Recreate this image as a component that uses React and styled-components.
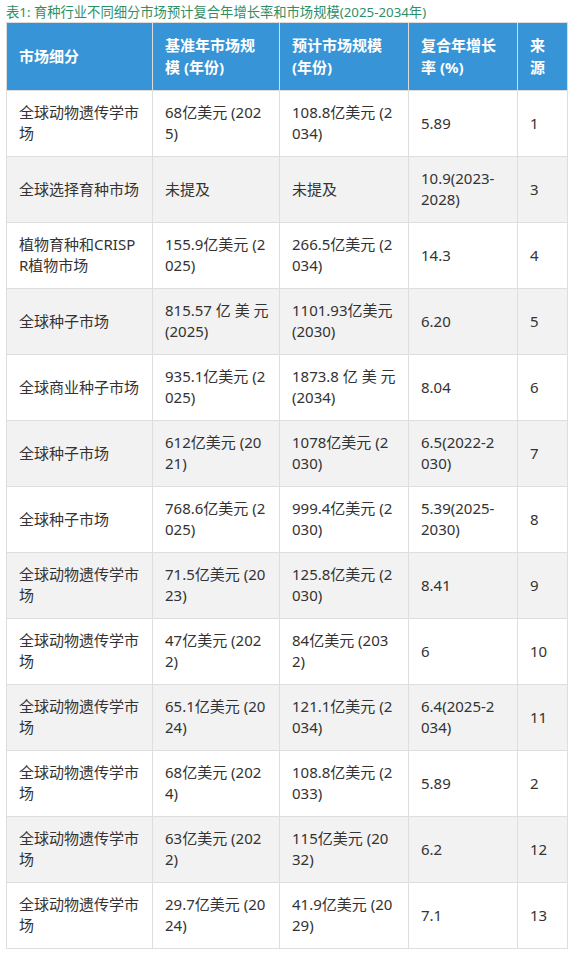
import React from 'react';
import styled, { createGlobalStyle } from 'styled-components';

const GlobalStyle = createGlobalStyle`
  html, body {
    margin: 0;
    padding: 0;
    background: #fff;
  }
  body {
    font-family: "Noto Sans", "Noto Sans CJK SC", sans-serif;
    color: #333;
  }
`;

const Page = styled.div`
  padding: 2px 5px 0 6px;
`;

const Caption = styled.div`
  font-size: 13.3px;
  line-height: 20px;
  color: #2f8f66;
  white-space: nowrap;
`;

const Table = styled.table`
  width: 561px;
  border-collapse: collapse;
  table-layout: fixed;
`;

const HeadCell = styled.th`
  background: #3794d6;
  color: #fff;
  font-size: 15px;
  font-weight: 700;
  line-height: 22px;
  text-align: left;
  vertical-align: middle;
  height: 44px;
  padding: 11px ${p => p.$pr}px 12px 12px;
  border: 1px solid #dcdcdc;
`;

const Row = styled.tr`
  background: ${p => (p.$alt ? '#f2f2f2' : '#fff')};
`;

const Cell = styled.td`
  font-size: 15px;
  line-height: 21px;
  height: 42px;
  padding: 11px ${p => p.$pr}px 12px 12px;
  vertical-align: middle;
  word-break: break-all;
  border: 1px solid #dedede;
  color: #333;
`;

const columns = [
  { title: '市场细分', width: 146, pr: 12 },
  { title: '基准年市场规模 (年份)', width: 127, pr: 10 },
  { title: '预计市场规模 (年份)', width: 129, pr: 12 },
  { title: '复合年增长率 (%)', width: 109, pr: 18 },
  { title: '来源', width: 50, pr: 12 },
];

const rows = [
  ['全球动物遗传学市场', '68亿美元 (2025)', '108.8亿美元 (2034)', '5.89', '1'],
  ['全球选择育种市场', '未提及', '未提及', '10.9(2023-2028)', '3'],
  ['植物育种和CRISPR植物市场', '155.9亿美元 (2025)', '266.5亿美元 (2034)', '14.3', '4'],
  ['全球种子市场', '815.57 亿 美 元 (2025)', '1101.93亿美元 (2030)', '6.20', '5'],
  ['全球商业种子市场', '935.1亿美元 (2025)', '1873.8 亿 美 元 (2034)', '8.04', '6'],
  ['全球种子市场', '612亿美元 (2021)', '1078亿美元 (2030)', '6.5(2022-2030)', '7'],
  ['全球种子市场', '768.6亿美元 (2025)', '999.4亿美元 (2030)', '5.39(2025-2030)', '8'],
  ['全球动物遗传学市场', '71.5亿美元 (2023)', '125.8亿美元 (2030)', '8.41', '9'],
  ['全球动物遗传学市场', '47亿美元 (2022)', '84亿美元 (2032)', '6', '10'],
  ['全球动物遗传学市场', '65.1亿美元 (2024)', '121.1亿美元 (2034)', '6.4(2025-2034)', '11'],
  ['全球动物遗传学市场', '68亿美元 (2024)', '108.8亿美元 (2033)', '5.89', '2'],
  ['全球动物遗传学市场', '63亿美元 (2022)', '115亿美元 (2032)', '6.2', '12'],
  ['全球动物遗传学市场', '29.7亿美元 (2024)', '41.9亿美元 (2029)', '7.1', '13'],
];

export default function App() {
  return (
    <>
      <GlobalStyle />
      <Page>
        <Caption>表1: 育种行业不同细分市场预计复合年增长率和市场规模(2025-2034年)</Caption>
        <Table>
          <colgroup>
            {columns.map((c, i) => (
              <col key={i} style={{ width: c.width }} />
            ))}
          </colgroup>
          <thead>
            <tr>
              {columns.map((c, i) => (
                <HeadCell key={i} $pr={c.pr}>{c.title}</HeadCell>
              ))}
            </tr>
          </thead>
          <tbody>
            {rows.map((r, i) => (
              <Row key={i} $alt={i % 2 === 1}>
                {r.map((v, j) => (
                  <Cell key={j} $pr={columns[j].pr}>{v}</Cell>
                ))}
              </Row>
            ))}
          </tbody>
        </Table>
      </Page>
    </>
  );
}
